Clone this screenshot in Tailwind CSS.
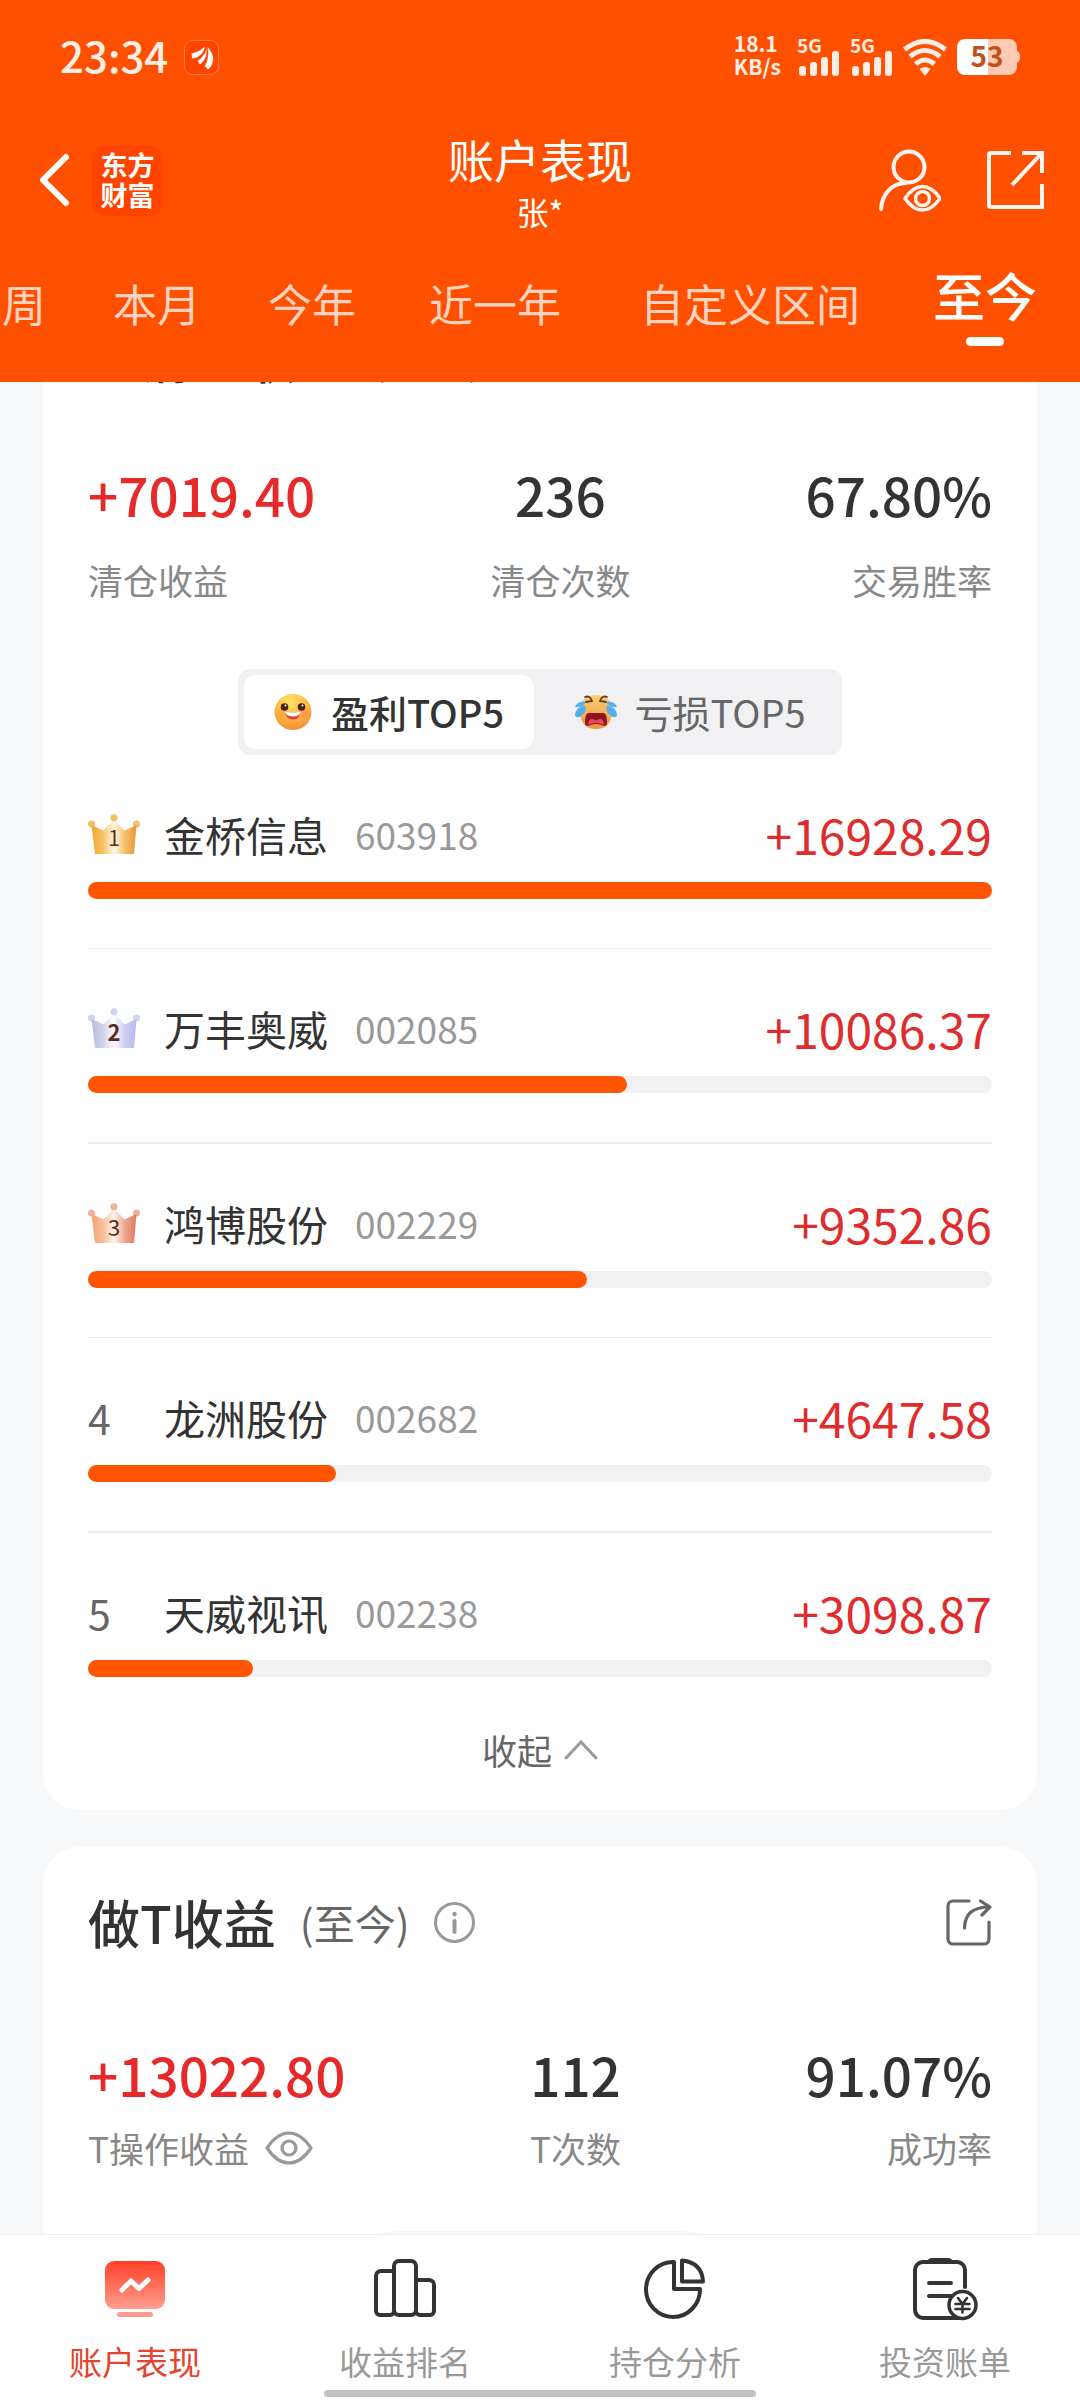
<!DOCTYPE html>
<html lang="zh-CN">
<head>
    <meta charset="UTF-8">
    <meta name="viewport" content="width=device-width, initial-scale=1.0">
    <title>账户表现</title>
    <script src="https://cdn.jsdelivr.net/npm/@tailwindcss/browser@4"></script>
</head>
<body class="h-screen flex flex-col overflow-hidden bg-[#f7f8fa] text-[#333333] font-['Noto_Sans_CJK_SC',sans-serif]">

    <!-- Header -->
    <header class="bg-[#ff5000] text-white shrink-0">

        <!-- Status bar -->
        <div class="flex items-center justify-between h-[114px] pl-[60px] pr-[60px] text-[#ffeee6]">
            <div class="flex items-center gap-4">
                <span class="pb-1 text-[42px] leading-[48px] font-medium">23:34</span>
                <svg class="w-[35px] h-[35px]" viewBox="0 0 35 35">
                    <rect x="0.5" y="0.5" width="34" height="34" rx="8" fill="#ff4400" stroke="#ff7b4d"/>
                    <g fill="#fff" stroke="#ff4400" stroke-width="0.8">
                        <path d="M23 6c4 4 7 9 6.500 14-.5 5-3 8-5.500 10l-3.500-4C24 20 24.500 12 23 6z"/>
                        <path d="M22.500 6C24 14 22 20 16 25l-3-4c6-4 9-9 9.500-15z"/>
                        <path d="M21.500 6C20 14 15 18 8 19l-1-6c7-.5 10-4 14.500-7z"/>
                    </g>
                </svg>
            </div>
            <div class="flex items-center gap-[10px]">
                <div class="text-[21px] leading-[23px] font-bold pb-1 mr-[6px]">
                    <p>18.1</p>
                    <p>KB/s</p>
                </div>
                <svg class="w-[43px] h-[38px] overflow-visible" viewBox="0 0 43 38" fill="currentColor">
                    <text x="0" y="15" font-size="19" font-weight="700">5G</text>
                    <rect x="2" y="28" width="7" height="10" rx="3"/>
                    <rect x="13" y="24" width="7" height="14" rx="3"/>
                    <rect x="24" y="19" width="7" height="19" rx="3"/>
                    <rect x="35" y="13" width="7" height="25" rx="3"/>
                </svg>
                <svg class="w-[43px] h-[38px] overflow-visible" viewBox="0 0 43 38" fill="currentColor">
                    <text x="0" y="15" font-size="19" font-weight="700">5G</text>
                    <rect x="2" y="28" width="7" height="10" rx="3"/>
                    <rect x="13" y="24" width="7" height="14" rx="3"/>
                    <rect x="24" y="19" width="7" height="19" rx="3"/>
                    <rect x="35" y="13" width="7" height="25" rx="3"/>
                </svg>
                <svg class="w-[44px] h-[37px]" viewBox="0 0 44 37" fill="none" stroke="currentColor" stroke-width="5">
                    <path d="M1.500 10.500Q22-5.500 42.500 10.500"/>
                    <path d="M7 17.500Q22 5.500 37 17.500"/>
                    <path d="M12.500 25Q22 17 31.500 25"/>
                    <path d="M16.500 30Q22 26 27.500 30L22 37z" fill="currentColor" stroke="none"/>
                </svg>
                <svg class="w-[63px] h-[36px] overflow-visible" viewBox="0 0 63 36">
                    <path d="M31 0h21a8 8 0 0 1 8 8v4q3 1 3 6t-3 6v4a8 8 0 0 1-8 8H31z" fill="#ffcab3"/>
                    <path d="M31 0H8a8 8 0 0 0-8 8v20a8 8 0 0 0 8 8h23z" fill="#fff"/>
                    <text x="30" y="28" font-size="28" font-weight="700" text-anchor="middle" fill="#c2501c">53</text>
                </svg>
            </div>
        </div>

        <!-- Title bar -->
        <div class="grid grid-cols-[1fr_auto_1fr] items-center h-[132px] px-9">
            <div class="flex items-center gap-[20px]">
                <button type="button" aria-label="返回">
                    <svg class="w-[36px] h-[56px]" viewBox="0 0 36 56" fill="none" stroke="#fff" stroke-width="6" stroke-linecap="round" stroke-linejoin="round">
                        <path d="M30 5L7 28l23 23"/>
                    </svg>
                </button>
                <a href="#" class="flex flex-col items-center justify-center w-[71px] h-[71px] rounded-[14px] bg-[#ff4400] text-[27px] leading-[30px] font-bold">
                    <span>东方</span>
                    <span>财富</span>
                </a>
            </div>
            <div class="text-center pt-[10px]">
                <h1 class="text-[46px] leading-[53px]">账户表现</h1>
                <p class="text-[32px] leading-[53px]">张*</p>
            </div>
            <div class="flex items-center justify-end gap-[46px]">
                <button type="button" aria-label="查看账户">
                    <svg class="w-[63px] h-[63px]" viewBox="0 0 63 63" fill="none" stroke="#fff5f0" stroke-width="4" stroke-linecap="round">
                        <circle cx="31" cy="18" r="15.500"/>
                        <path d="M3 60C4 45 14 34 28 34"/>
                        <path d="M27 49.500Q35 37.500 44.500 37.500T62 49.500Q54 61 44.500 61T27 49.500z" stroke-width="3.500" stroke-linejoin="round"/>
                        <circle cx="44.500" cy="49.500" r="7" stroke-width="3.500"/>
                    </svg>
                </button>
                <button type="button" aria-label="分享">
                    <svg class="w-[57px] h-[58px]" viewBox="0 0 57 58" fill="none" stroke="#fff5f0" stroke-width="4">
                        <path d="M24 2H4a2 2 0 0 0-2 2v50a2 2 0 0 0 2 2h51V33"/>
                        <path d="M35 2h20v20M54 3L25 34"/>
                    </svg>
                </button>
            </div>
        </div>

        <!-- Period tabs -->
        <nav class="flex items-start justify-end gap-[67px] h-[136px] pr-[43px] overflow-hidden whitespace-nowrap text-[44px] leading-[60px] text-[#ffd3bf]">
            <a href="#" class="mt-[27px]">周</a>
            <a href="#" class="mt-[27px]">本月</a>
            <a href="#" class="mt-[27px]">今年</a>
            <a href="#" class="mt-[27px] px-[6px]">近一年</a>
            <a href="#" class="mt-[27px] px-[6px]">自定义区间</a>
            <a href="#" class="mt-[19px] flex flex-col items-center text-[52px] font-medium text-white">
                至今
                <span class="mt-[12px] w-[38px] h-[9px] rounded-full bg-white"></span>
            </a>
        </nav>
    </header>

    <main class="flex-1 min-h-0 overflow-y-auto [scrollbar-width:none] px-[43px]">

        <!-- Closed positions, scrolled partly under the header -->
        <section class="-mt-[100px] px-[45px] pt-[45px] pb-9 rounded-[36px] bg-white">
            <div class="flex items-center leading-[60px]">
                <h2 class="text-[52px] font-medium">已清仓收益</h2>
                <span class="ml-6 text-[41px] text-[#666666]">(至今)</span>
            </div>

            <dl class="flex justify-between mt-[77px]">
                <div class="flex flex-col gap-[32px]">
                    <dd class="text-[53px] leading-[60px] font-medium text-[#e62a2a]">+7019.40</dd>
                    <dt class="order-last text-[35px] leading-[48px] text-[#888888]">清仓收益</dt>
                </div>
                <div class="flex flex-col gap-[32px] text-center">
                    <dd class="text-[53px] leading-[60px] font-medium">236</dd>
                    <dt class="order-last text-[35px] leading-[48px] text-[#888888]">清仓次数</dt>
                </div>
                <div class="flex flex-col gap-[32px] text-right">
                    <dd class="text-[53px] leading-[60px] font-medium">67.80%</dd>
                    <dt class="order-last text-[35px] leading-[48px] text-[#888888]">交易胜率</dt>
                </div>
            </dl>

            <!-- Profit / loss switch -->
            <div class="grid grid-cols-[290px_1fr] w-[604px] h-[86px] mt-[65px] mx-auto p-[6px] rounded-[12px] bg-[#f1f1f4] text-[38px] leading-[48px]">
                <button type="button" class="flex items-center justify-center gap-[19px] rounded-[12px] bg-white font-medium">
                    <svg class="w-[38px] h-[38px]" viewBox="0 0 38 38">
                        <defs>
                            <radialGradient id="smile" cx="0.45" cy="0.2" r="0.85">
                                <stop offset="0" stop-color="#ffe36b"/>
                                <stop offset="0.55" stop-color="#fbb63c"/>
                                <stop offset="1" stop-color="#f08a3e"/>
                            </radialGradient>
                        </defs>
                        <ellipse cx="19" cy="19" rx="18.500" ry="18" fill="url(#smile)"/>
                        <circle cx="7" cy="21" r="4" fill="#ff9b4a" opacity="0.6"/>
                        <circle cx="31" cy="21" r="4" fill="#ff8a4a" opacity="0.6"/>
                        <circle cx="10.500" cy="14" r="3.800" fill="#4a1f14"/>
                        <circle cx="27.500" cy="14" r="3.800" fill="#4a1f14"/>
                        <circle cx="11.500" cy="12.500" r="1" fill="#fff"/>
                        <circle cx="28.500" cy="12.500" r="1" fill="#fff"/>
                        <path d="M11 18.500q8 2 15.500 0-.5 8-7.500 8t-8-8z" fill="#e0403a"/>
                        <path d="M11 18.500q8 2 15.500 0-.5 5-7.500 5t-8-5z" fill="#fff"/>
                    </svg>
                    盈利TOP5
                </button>
                <button type="button" class="flex items-center justify-center gap-4 pl-[10px] text-[#666666]">
                    <svg class="w-[44px] h-[36px]" viewBox="0 0 44 36">
                        <defs>
                            <linearGradient id="cry" x1="0" y1="0" x2="0" y2="1">
                                <stop offset="0" stop-color="#fbd070"/>
                                <stop offset="1" stop-color="#ee9440"/>
                            </linearGradient>
                        </defs>
                        <path d="M22 1c11 0 17 7 16 17-1 12-6 17-16 17S7 30 6 18C5 8 11 1 22 1z" fill="url(#cry)"/>
                        <path d="M11 3q5-2 7 4l-6 1M33 3q-5-2-7 4l6 1" fill="none" stroke="#6b3a22" stroke-width="1.800" stroke-linecap="round"/>
                        <path d="M11 28q0-9 4-9h14q4 0 4 9 0 4-3 4-8-4-16 0-3 0-3-4z" fill="#8e1420"/>
                        <path d="M14 31q0-6 4-6 4 1 4 2 0-1 4-2 4 0 4 6-8-4-16 0z" fill="#e5485a"/>
                        <path d="M12 8Q3 7 1 13q7 1 11-5zM11 11Q0 14 1 22q4 3 7-1 5-3 3-10z" fill="#55aef0"/>
                        <path d="M32 8q9-1 11 5-7 1-11-5zM33 11q11 3 10 11-4 3-7-1-5-3-3-10z" fill="#55aef0"/>
                    </svg>
                    亏损TOP5
                </button>
            </div>

            <!-- Top 5 -->
            <ol>
                <li class="pt-[49px] pb-[49px] border-b border-[#eeeeee]">
                    <div class="flex items-center leading-[60px]">
                        <div class="w-[76px]">
                            <svg class="w-[52px] h-[40px]" viewBox="0 0 52 40">
                                <defs>
                                    <linearGradient id="gold">
                                        <stop offset="0" stop-color="#f0a42c"/>
                                        <stop offset="0.25" stop-color="#f6c263"/>
                                        <stop offset="0.5" stop-color="#fff8e4"/>
                                        <stop offset="0.75" stop-color="#f5bf66"/>
                                        <stop offset="1" stop-color="#e99438"/>
                                    </linearGradient>
                                </defs>
                                <g fill="#f0bf6a"><circle cx="3.500" cy="10" r="3.500"/><circle cx="26" cy="3.800" r="3.600"/><circle cx="48.500" cy="10" r="3.500"/></g>
                                <path d="M3.500 11l12 5.500L24 7.500h4l8.500 9 12-5.500L46 40H7z" fill="url(#gold)"/>
                                <text x="26" y="32" font-size="21" text-anchor="middle" fill="#5b2a1e">1</text>
                            </svg>
                        </div>
                        <span class="text-[41px]">金桥信息</span>
                        <span class="ml-[27px] text-[37px] text-[#999999]">603918</span>
                        <span class="ml-auto text-[48px] text-[#df2c2c]">+16928.29</span>
                    </div>
                    <div class="mt-[18px] h-[17px] rounded-full bg-[#f1f1f4]">
                        <div class="h-full rounded-full bg-[#ff5500]" style="width: 100%"></div>
                    </div>
                </li>
                <li class="pt-[49px] pb-[49px] border-b-2 border-[#eeeeee]">
                    <div class="flex items-center leading-[60px]">
                        <div class="w-[76px]">
                            <svg class="w-[52px] h-[40px]" viewBox="0 0 52 40">
                                <defs>
                                    <linearGradient id="silver">
                                        <stop offset="0" stop-color="#b5bbdd"/>
                                        <stop offset="0.25" stop-color="#cfd3ea"/>
                                        <stop offset="0.5" stop-color="#fbfbff"/>
                                        <stop offset="0.75" stop-color="#cdcff2"/>
                                        <stop offset="1" stop-color="#b5b9ec"/>
                                    </linearGradient>
                                </defs>
                                <g fill="#d0d5f3"><circle cx="3.500" cy="10" r="3.500"/><circle cx="26" cy="3.800" r="3.600"/><circle cx="48.500" cy="10" r="3.500"/></g>
                                <path d="M3.500 11l12 5.500L24 7.500h4l8.500 9 12-5.500L46 40H7z" fill="url(#silver)"/>
                                <text x="26" y="33" font-size="22" font-weight="700" text-anchor="middle" fill="#5b2a1e">2</text>
                            </svg>
                        </div>
                        <span class="text-[41px]">万丰奥威</span>
                        <span class="ml-[27px] text-[37px] text-[#999999]">002085</span>
                        <span class="ml-auto text-[48px] text-[#df2c2c]">+10086.37</span>
                    </div>
                    <div class="mt-[18px] h-[17px] rounded-full bg-[#f1f1f4]">
                        <div class="h-full rounded-full bg-[#ff5500]" style="width: 59.6%"></div>
                    </div>
                </li>
                <li class="pt-[49px] pb-[49px] border-b border-[#eeeeee]">
                    <div class="flex items-center leading-[60px]">
                        <div class="w-[76px]">
                            <svg class="w-[52px] h-[40px]" viewBox="0 0 52 40">
                                <defs>
                                    <linearGradient id="bronze">
                                        <stop offset="0" stop-color="#f3a272"/>
                                        <stop offset="0.25" stop-color="#f8bd98"/>
                                        <stop offset="0.5" stop-color="#fff3ea"/>
                                        <stop offset="0.75" stop-color="#eda68a"/>
                                        <stop offset="1" stop-color="#de7a5e"/>
                                    </linearGradient>
                                </defs>
                                <g fill="#efb09c"><circle cx="3.500" cy="10" r="3.500"/><circle cx="26" cy="3.800" r="3.600"/><circle cx="48.500" cy="10" r="3.500"/></g>
                                <path d="M3.500 11l12 5.500L24 7.500h4l8.500 9 12-5.500L46 40H7z" fill="url(#bronze)"/>
                                <text x="26" y="33" font-size="22" text-anchor="middle" fill="#5b2a1e">3</text>
                            </svg>
                        </div>
                        <span class="text-[41px]">鸿博股份</span>
                        <span class="ml-[27px] text-[37px] text-[#999999]">002229</span>
                        <span class="ml-auto text-[48px] text-[#df2c2c]">+9352.86</span>
                    </div>
                    <div class="mt-[18px] h-[17px] rounded-full bg-[#f1f1f4]">
                        <div class="h-full rounded-full bg-[#ff5500]" style="width: 55.2%"></div>
                    </div>
                </li>
                <li class="pt-[49px] pb-[49px] border-b-2 border-[#eeeeee]">
                    <div class="flex items-center leading-[60px]">
                        <span class="w-[76px] text-[41px] text-[#666666]">4</span>
                        <span class="text-[41px]">龙洲股份</span>
                        <span class="ml-[27px] text-[37px] text-[#999999]">002682</span>
                        <span class="ml-auto text-[48px] text-[#df2c2c]">+4647.58</span>
                    </div>
                    <div class="mt-[18px] h-[17px] rounded-full bg-[#f1f1f4]">
                        <div class="h-full rounded-full bg-[#ff5500]" style="width: 27.4%"></div>
                    </div>
                </li>
                <li class="pt-[49px] pb-[49px]">
                    <div class="flex items-center leading-[60px]">
                        <span class="w-[76px] text-[41px] text-[#666666]">5</span>
                        <span class="text-[41px]">天威视讯</span>
                        <span class="ml-[27px] text-[37px] text-[#999999]">002238</span>
                        <span class="ml-auto text-[48px] text-[#df2c2c]">+3098.87</span>
                    </div>
                    <div class="mt-[18px] h-[17px] rounded-full bg-[#f1f1f4]">
                        <div class="h-full rounded-full bg-[#ff5500]" style="width: 18.3%"></div>
                    </div>
                </li>
            </ol>

            <button type="button" class="flex items-center gap-3 mx-auto text-[35px] leading-[48px] text-[#666666]">
                收起
                <svg class="w-[34px] h-[20px]" viewBox="0 0 34 20" fill="none" stroke="#999" stroke-width="3" stroke-linecap="round">
                    <path d="M2 18L17 2l15 16"/>
                </svg>
            </button>
        </section>

        <!-- T trading profit -->
        <section class="mt-[37px] px-[45px] pt-[45px] pb-9 rounded-[36px] bg-white">
            <div class="flex items-center leading-[60px]">
                <h2 class="text-[52px] font-medium">做T收益</h2>
                <span class="ml-6 text-[41px] text-[#666666]">(至今)</span>
                <button type="button" aria-label="说明" class="ml-6">
                    <svg class="w-[41px] h-[41px]" viewBox="0 0 41 41" fill="none" stroke="#999" stroke-width="3">
                        <circle cx="20.500" cy="20.500" r="19"/>
                        <path d="M20.500 19v11" stroke-width="4" stroke-linecap="round"/>
                        <circle cx="20.500" cy="12" r="2.200" fill="#999" stroke="none"/>
                    </svg>
                </button>
                <button type="button" aria-label="分享" class="ml-auto">
                    <svg class="w-[46px] h-[47px]" viewBox="0 0 46 47" fill="none" stroke="#666" stroke-width="3.200" stroke-linecap="round" stroke-linejoin="round">
                        <path d="M23 2H7a5 5 0 0 0-5 5v33a5 5 0 0 0 5 5h31a5 5 0 0 0 5-5V23"/>
                        <path d="M18.500 29C19 15 26 8 44 8M34.500 2L44 8l-8 8"/>
                    </svg>
                </button>
            </div>

            <dl class="flex justify-between mt-[92px]">
                <div class="flex flex-col gap-[20px]">
                    <dd class="text-[53px] leading-[60px] font-medium text-[#e62a2a]">+13022.80</dd>
                    <dt class="order-last flex items-center gap-4 text-[35px] leading-[48px] text-[#888888]">
                        T操作收益
                        <svg class="w-[48px] h-[34px]" viewBox="0 0 48 34" fill="none" stroke="#999" stroke-width="3.200" stroke-linejoin="round">
                            <path d="M2 17Q12 2 24 2t22 15Q36 32 24 32T2 17z"/>
                            <circle cx="24" cy="17" r="7"/>
                        </svg>
                    </dt>
                </div>
                <div class="flex flex-col gap-[20px] text-center">
                    <dd class="text-[53px] leading-[60px] font-medium">112</dd>
                    <dt class="order-last text-[35px] leading-[48px] text-[#888888]">T次数</dt>
                </div>
                <div class="flex flex-col gap-[20px] text-right">
                    <dd class="text-[53px] leading-[60px] font-medium">91.07%</dd>
                    <dt class="order-last text-[35px] leading-[48px] text-[#888888]">成功率</dt>
                </div>
            </dl>

            <div class="w-[340px] h-[86px] mt-[59px] mx-auto rounded-[24px] bg-[#f7f7f7]"></div>
        </section>
    </main>

    <!-- Bottom navigation -->
    <footer class="shrink-0 pt-[22px] pb-[3px] border-t border-[#eeeeee] bg-white">
        <nav class="grid grid-cols-4 text-[33px] leading-[40px] text-[#999999]">
            <a href="#" class="flex flex-col items-center gap-5 text-[#e5432e]">
                <svg class="w-[66px] h-[64px]" viewBox="0 0 66 64">
                    <defs>
                        <linearGradient id="active" x1="0" y1="0" x2="0" y2="1">
                            <stop offset="0" stop-color="#ff3f26"/>
                            <stop offset="1" stop-color="#ff9e90"/>
                        </linearGradient>
                    </defs>
                    <rect x="3" y="4" width="60" height="48" rx="9" fill="url(#active)"/>
                    <rect x="15" y="55" width="36" height="5" rx="2.500" fill="#f89c90"/>
                    <path d="M20 33l9-9 8 7.500 9-8.500" fill="none" stroke="#fff" stroke-width="5" stroke-linecap="round" stroke-linejoin="round"/>
                </svg>
                账户表现
            </a>
            <a href="#" class="flex flex-col items-center gap-5">
                <svg class="w-[66px] h-[64px]" viewBox="0 0 66 64" fill="none" stroke="#333" stroke-width="4">
                    <path d="M22 14h-13a5 5 0 0 0-5 5v35a4 4 0 0 0 4 4h10a4 4 0 0 0 4-4"/>
                    <rect x="22" y="4" width="22" height="54" rx="5"/>
                    <path d="M45 23h12a5 5 0 0 1 5 5v26a4 4 0 0 1-4 4h-10a4 4 0 0 1-4-4"/>
                </svg>
                收益排名
            </a>
            <a href="#" class="flex flex-col items-center gap-5">
                <svg class="w-[66px] h-[64px]" viewBox="0 0 66 64" fill="none" stroke="#333" stroke-width="4" stroke-linejoin="round">
                    <path d="M32 5A27 27.500 0 1 0 58 32H32z"/>
                    <path d="M40 3.500q20 2 21 21H40z"/>
                </svg>
                持仓分析
            </a>
            <a href="#" class="flex flex-col items-center gap-5">
                <svg class="w-[66px] h-[64px]" viewBox="0 0 66 64" fill="none" stroke="#333" stroke-width="4" stroke-linecap="round">
                    <path d="M53 30V13a8 8 0 0 0-8-8H11a8 8 0 0 0-8 8v40a8 8 0 0 0 8 8h40"/>
                    <path d="M15 5q1-4 5-4h16q4 0 5 4z" fill="#333" stroke="none"/>
                    <path d="M17 26h22M17 39h22"/>
                    <circle cx="50.500" cy="48" r="13.500" fill="#fff" stroke-width="3.500"/>
                    <path d="M46 41l4.500 6 4.500-6M43.500 47h14M43.500 52h14M50.500 47v8.500" stroke-width="2.600"/>
                </svg>
                投资账单
            </a>
        </nav>
        <div class="w-2/5 h-[7px] mt-[9px] mx-auto rounded-full bg-[#c1c1c1]"></div>
    </footer>

</body>
</html>
